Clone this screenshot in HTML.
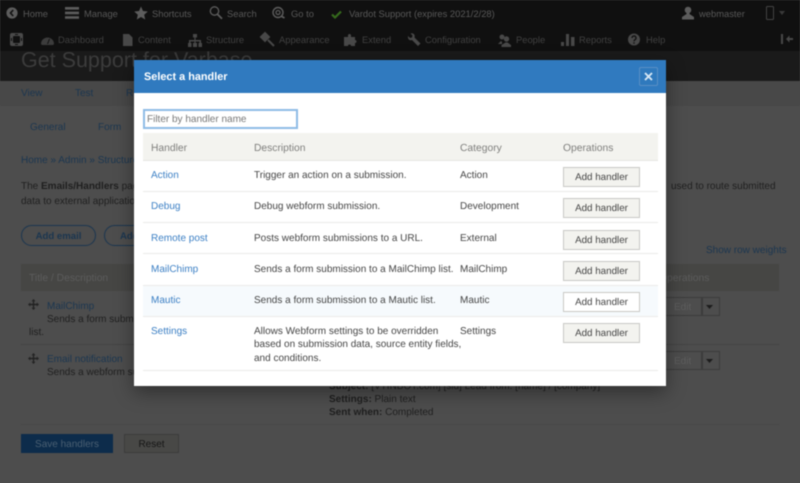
<!DOCTYPE html>
<html><head><meta charset="utf-8"><style>
html,body{margin:0;padding:0;width:800px;height:483px;overflow:hidden;background:#4d4d4d}
#r{position:relative;width:800px;height:483px;overflow:hidden;font-family:"Liberation Sans",sans-serif;font-size:10px;filter:blur(.4px);text-rendering:geometricPrecision}
#r div{position:absolute;white-space:nowrap}
.t{color:#585858;line-height:14px;font-size:9.4px;margin-top:1px}
.m{color:#404040;line-height:14px;font-size:9.4px;margin-top:1px}
.l{color:#1b3650;line-height:14px;margin-top:2px}
.g{color:#1f1f1f;line-height:14px;margin-top:2px}
svg{position:absolute;overflow:visible}
.h{color:#7f7f7d;line-height:14px;font-size:10.3px;margin-top:2px}
.a1{color:#3b7fc4;line-height:14px;margin-top:2px}
.d{color:#454545;line-height:14px;margin-top:2px}
.ln{height:1px;left:143px;width:515px;background:#ebebe9}
.btn{left:563px;width:75px;height:18px;border:1px solid #c9c9c5;background:#f3f3ef;color:#444;text-align:center;line-height:20px;font-size:9.8px}
</style></head><body><div id="r">
<!-- bars -->
<div style="left:0;top:0;width:800px;height:51px;background:#101010"></div>
<div style="left:0;top:51px;width:800px;height:30px;background:#1a1a1a"></div>
<div style="left:0;top:81px;width:800px;height:25px;background:#484848"></div>
<!-- toolbar row 1 -->
<svg style="left:6px;top:6px" width="14" height="14" viewBox="0 0 14 14"><circle cx="6" cy="7" r="5.6" fill="#5c5c5c"/><path d="M7.200 4L4.500 7l2.700 3" fill="none" stroke="#101010" stroke-width="1.600"/></svg>
<div class="t" style="left:23px;top:6px">Home</div>
<svg style="left:65px;top:6px" width="14" height="14"><path d="M0 1h14v2.600H0zM0 5.600h14v2.600H0zM0 10.200h14v2.600H0z" fill="#5c5c5c"/></svg>
<div class="t" style="left:84px;top:6px">Manage</div>
<svg style="left:134px;top:6px" width="14" height="14" viewBox="0 0 14 14"><path d="M7 .5l2 4.500 4.800.5-3.600 3.200 1 4.800L7 11l-4.200 2.500 1-4.800L.2 5.500 5 5z" fill="#5c5c5c"/></svg>
<div class="t" style="left:152px;top:6px">Shortcuts</div>
<svg style="left:209px;top:6px" width="14" height="14" viewBox="0 0 14 14"><circle cx="5.500" cy="5" r="4.200" fill="none" stroke="#5c5c5c" stroke-width="1.300"/><path d="M8.500 8.200l4.500 4.500" stroke="#5c5c5c" stroke-width="1.800"/></svg>
<div class="t" style="left:227px;top:6px">Search</div>
<svg style="left:272px;top:6px" width="14" height="14" viewBox="0 0 14 14"><circle cx="6" cy="6.500" r="5" fill="none" stroke="#5c5c5c" stroke-width="1.400"/><circle cx="6" cy="6.500" r="2" fill="none" stroke="#5c5c5c" stroke-width="1.200"/><path d="M9 10l3.500 2" stroke="#5c5c5c" stroke-width="1.800"/></svg>
<div class="t" style="left:291px;top:6px">Go to</div>
<svg style="left:331px;top:10px" width="11" height="9" viewBox="0 0 11 9"><path d="M1 4.500l3 3L10 1.500" fill="none" stroke="#356a1c" stroke-width="2.200"/></svg>
<div class="t" style="left:349px;top:6px">Vardot Support (expires 2021/2/28)</div>
<svg style="left:681px;top:6px" width="14" height="14" viewBox="0 0 14 14"><circle cx="7" cy="4" r="3.300" fill="#5c5c5c"/><path d="M5.500 6.500v1.500L1 11v2.500h12V11L8.500 8V6.500z" fill="#5c5c5c"/></svg>
<div class="t" style="left:699px;top:6px">webmaster</div>
<svg style="left:766px;top:6px" width="8" height="14"><rect x=".5" y=".5" width="7" height="13" rx="1" fill="none" stroke="#444"/></svg>
<svg style="left:779px;top:11px" width="7" height="4"><path d="M0 0h6L3 4z" fill="#3a3a3a"/></svg>
<!-- toolbar row 2 -->
<svg style="left:10px;top:33px" width="14" height="14" viewBox="0 0 14 14"><rect x="0" y="0" width="13" height="13" rx="2" fill="#4a4a4a"/><rect x="3" y="3" width="7" height="7" rx="1" fill="#101010"/><path d="M5 1.500h3M5 11.500h3M1.500 5v3M11.500 5v3" stroke="#101010" stroke-width="1"/></svg>
<svg style="left:41px;top:34px" width="13" height="12" viewBox="0 0 13 12"><path d="M0 10a6.500 6.500 0 1 1 13 0l-1 1H1z" fill="#3c3c3c"/><path d="M6.500 10L8.500 5" stroke="#101010" stroke-width="1"/></svg>
<div class="m" style="left:58px;top:32px">Dashboard</div>
<svg style="left:123px;top:34px" width="10" height="12" viewBox="0 0 10 12"><path d="M0 0h6l3.500 3.500V12H0z" fill="#484848"/></svg>
<div class="m" style="left:138px;top:32px">Content</div>
<svg style="left:188px;top:34px" width="14" height="13" viewBox="0 0 14 13"><path d="M5 0h4v3.500H7.600V6H13v3h1v4h-3.500V9H11.500V7.500H7.600V9H9v4H5V9h1.400V7.500H2.500V9H3.500v4H0V9h1V6h5.400V3.500H5z" fill="#484848"/></svg>
<div class="m" style="left:206px;top:32px">Structure</div>
<svg style="left:261px;top:33px" width="14" height="14" viewBox="0 0 14 14"><path d="M0 4l4-4 4 4-4 4zM7 7l6 6" fill="#484848" stroke="#484848" stroke-width="2"/></svg>
<div class="m" style="left:279px;top:32px">Appearance</div>
<svg style="left:344px;top:34px" width="14" height="12" viewBox="0 0 14 12"><path d="M0 3h4V1.500a1.500 1.500 0 0 1 3 0V3h4v3a1.500 1.500 0 0 1 0 3v3H7a1.500 1.500 0 0 0-3 0H0z" fill="#484848"/></svg>
<div class="m" style="left:362px;top:32px">Extend</div>
<svg style="left:407px;top:33px" width="14" height="14" viewBox="0 0 14 14"><path d="M1 3l2 2 2-.5.5-2L3.500 0.500C6 -.5 8.500 1.500 7.500 4.500L13.500 10.500l-2.500 2.500L5 7C2.500 8 .5 6 1 3z" fill="#484848"/></svg>
<div class="m" style="left:425px;top:32px">Configuration</div>
<svg style="left:498px;top:34px" width="13" height="13" viewBox="0 0 13 13"><circle cx="4" cy="3" r="2.500" fill="#484848"/><circle cx="8.500" cy="5" r="2.700" fill="#484848"/><path d="M0 10l3-3 1 1v2zM3.500 13v-2l4-2.500h2l3.500 2.500v2z" fill="#484848"/></svg>
<div class="m" style="left:516px;top:32px">People</div>
<svg style="left:561px;top:34px" width="14" height="12"><path d="M0 8h3v4H0zM5 0h3v12H5zM10 3h3.500v9H10z" fill="#484848"/></svg>
<div class="m" style="left:579px;top:32px">Reports</div>
<svg style="left:628px;top:33px" width="13" height="13" viewBox="0 0 13 13"><circle cx="6" cy="6.500" r="6" fill="#484848"/><path d="M4 5a2 2 0 1 1 3 1.700c-.7.4-1 .8-1 1.600M6 9.300v1.500" fill="none" stroke="#101010" stroke-width="1.300"/></svg>
<div class="m" style="left:646px;top:32px">Help</div>
<svg style="left:781px;top:34px" width="14" height="10"><path d="M0 0h2v10H0zM5 5l3.500-3.500V4H12v2H8.500v2.500z" fill="#484848"/></svg>
<!-- page heading -->
<div style="left:21px;top:46px;font-size:21.5px;line-height:28px;color:#3c3c3c">Get Support for Varbase</div>
<!-- tabs -->
<div class="l" style="left:21px;top:85px">View</div>
<div class="l" style="left:75px;top:85px">Test</div>
<div class="l" style="left:126px;top:85px">Re</div>
<div class="l" style="left:30px;top:119px">General</div>
<div class="l" style="left:98px;top:119px">Form</div>
<div class="l" style="left:21px;top:152px">Home » Admin » Structure »</div>
<div class="g" style="left:21px;top:178px">The <b>Emails/Handlers</b> page and more</div>
<div class="g" style="left:21px;top:193px">data to external applications and more</div>
<div class="g" style="left:671px;top:178px">used to route submitted</div>
<div style="left:21px;top:225px;width:73px;height:19px;border:1px solid #1b3650;border-radius:11px;color:#1b3650;text-align:center;line-height:21px;font-weight:bold;font-size:9.6px">Add email</div>
<div style="left:104px;top:225px;width:60px;height:19px;border:1px solid #1b3650;border-radius:11px;color:#1b3650;line-height:21px;font-weight:bold;font-size:9.6px;padding-left:15px">Add</div>
<div class="l" style="left:706px;top:242px">Show row weights</div>
<div style="left:21px;top:264px;width:758px;height:27px;background:#464644"></div>
<div style="left:29px;top:272px;color:#5c5c5c;line-height:14px;font-size:10.3px">Title / Description</div>
<div style="left:659px;top:272px;color:#5c5c5c;line-height:14px;font-size:10.3px">Operations</div>
<svg style="left:28px;top:299px" width="11" height="11" viewBox="0 0 11 11"><path d="M5.500 0l2 2.300H6.200v2.500h2.500V3.500L11 5.500 8.700 7.500V6.200H6.200v2.500h1.300L5.500 11 3.500 8.700h1.300V6.200H2.300v1.300L0 5.500l2.300-2v1.300h2.500V2.300H3.500z" fill="#222"/></svg>
<div class="l" style="left:47px;top:298px">MailChimp</div>
<div class="g" style="left:47px;top:311px">Sends a form submission to</div>
<div class="g" style="left:29px;top:324px">list.</div>
<div style="left:21px;top:344px;width:758px;height:1px;background:#444"></div>
<svg style="left:28px;top:353px" width="11" height="11" viewBox="0 0 11 11"><path d="M5.500 0l2 2.300H6.200v2.500h2.500V3.500L11 5.500 8.700 7.500V6.200H6.200v2.500h1.300L5.500 11 3.500 8.700h1.300V6.200H2.300v1.300L0 5.500l2.300-2v1.300h2.500V2.300H3.500z" fill="#222"/></svg>
<div class="l" style="left:47px;top:351px">Email notification</div>
<div class="g" style="left:47px;top:364px">Sends a webform submission</div>
<div style="left:660px;top:297px;width:41px;height:17px;border:1px solid #3c3c3c;color:#5e5e5e;line-height:19px;text-indent:13px">Edit</div>
<div style="left:701px;top:297px;width:17px;height:17px;border:1px solid #3c3c3c"></div>
<svg style="left:706px;top:305px" width="8" height="4"><path d="M0 0h7L3.500 4z" fill="#1c1c1c"/></svg>
<div style="left:660px;top:351px;width:41px;height:17px;border:1px solid #3c3c3c;color:#5e5e5e;line-height:19px;text-indent:13px">Edit</div>
<div style="left:701px;top:351px;width:17px;height:17px;border:1px solid #3c3c3c"></div>
<svg style="left:706px;top:359px" width="8" height="4"><path d="M0 0h7L3.500 4z" fill="#1c1c1c"/></svg>
<div class="g" style="left:329px;top:378px"><b>Subject:</b> [VTINBOT.com] [sid] Lead from: [name] / [company]</div>
<div class="g" style="left:329px;top:391px"><b>Settings:</b> Plain text</div>
<div class="g" style="left:329px;top:404px"><b>Sent when:</b> Completed</div>
<div style="left:21px;top:424px;width:758px;height:1px;background:#484848"></div>
<div style="left:21px;top:434px;width:92px;height:19px;background:#0d2c4b;color:#4a5f72;text-align:center;line-height:21px">Save handlers</div>
<div style="left:124px;top:434px;width:53px;height:17px;border:1px solid #3c3c3c;background:#484846;color:#161616;text-align:center;line-height:19px">Reset</div>
<!-- modal -->
<div style="left:134px;top:60px;width:532px;height:326px;background:#fff;box-shadow:0 6px 18px rgba(0,0,0,.4)"></div>
<div style="left:134px;top:60px;width:532px;height:33px;background:#307abf;color:#fff;font-size:10.9px;font-weight:bold;line-height:34px;text-indent:10px">Select a handler</div>
<div style="left:639px;top:67px;width:17px;height:17px;border:1px solid #5a8fc4;border-radius:2px;background:#2f79bd"></div>
<svg style="left:644px;top:72px" width="9" height="9"><path d="M1 1l7 7M8 1l-7 7" stroke="#d8e8f5" stroke-width="1.900"/></svg>
<div style="left:143px;top:109px;width:149px;height:16px;border:2px solid #8fbbe6;color:#777;line-height:17px;padding-left:2px;background:#fff;box-sizing:content-box">Filter by handler name</div>
<div style="left:143px;top:133px;width:515px;height:27px;background:#f3f3ef"></div>
<div class="h" style="left:151px;top:140px">Handler</div>
<div class="h" style="left:254px;top:140px">Description</div>
<div class="h" style="left:460px;top:140px">Category</div>
<div class="h" style="left:563px;top:140px">Operations</div>
<div class="ln" style="top:160px;background:#e6e6e3"></div>
<div class="ln" style="top:191px"></div>
<div class="ln" style="top:222px"></div>
<div class="ln" style="top:253px"></div>
<div class="ln" style="top:285px"></div>
<div style="left:143px;top:286px;width:515px;height:30px;background:#f6fafd"></div>
<div class="ln" style="top:316px"></div>
<div class="ln" style="top:370px"></div>
<div class="a1" style="left:151px;top:167px">Action</div>
<div class="d" style="left:254px;top:167px">Trigger an action on a submission.</div>
<div class="d" style="left:460px;top:167px">Action</div>
<div class="btn" style="top:167px">Add handler</div>
<div class="a1" style="left:151px;top:198px">Debug</div>
<div class="d" style="left:254px;top:198px">Debug webform submission.</div>
<div class="d" style="left:460px;top:198px">Development</div>
<div class="btn" style="top:198px">Add handler</div>
<div class="a1" style="left:151px;top:230px">Remote post</div>
<div class="d" style="left:254px;top:230px">Posts webform submissions to a URL.</div>
<div class="d" style="left:460px;top:230px">External</div>
<div class="btn" style="top:230px">Add handler</div>
<div class="a1" style="left:151px;top:261px">MailChimp</div>
<div class="d" style="left:254px;top:261px">Sends a form submission to a MailChimp list.</div>
<div class="d" style="left:460px;top:261px">MailChimp</div>
<div class="btn" style="top:261px">Add handler</div>
<div class="a1" style="left:151px;top:292px">Mautic</div>
<div class="d" style="left:254px;top:292px">Sends a form submission to a Mautic list.</div>
<div class="d" style="left:460px;top:292px">Mautic</div>
<div class="btn" style="top:292px;background:#fff">Add handler</div>
<div class="a1" style="left:151px;top:323px">Settings</div>
<div class="d" style="left:254px;top:323px">Allows Webform settings to be overridden</div>
<div class="d" style="left:254px;top:336px">based on submission data, source entity fields,</div>
<div class="d" style="left:254px;top:350px">and conditions.</div>
<div class="d" style="left:460px;top:323px">Settings</div>
<div class="btn" style="top:323px">Add handler</div>
</div></body></html>
